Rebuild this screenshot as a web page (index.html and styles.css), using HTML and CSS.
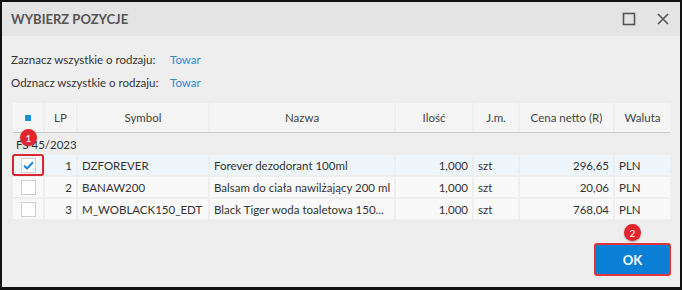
FILE: index.html
```html
<!DOCTYPE html>
<html lang="pl">
<head>
    <meta charset="UTF-8">
    <meta name="viewport" content="width=device-width, initial-scale=1.0">
    <title>Wybierz pozycje</title>
    <link rel="stylesheet" href="styles.css">
</head>
<body>

    <div class="dialog">
        <!-- pasek tytułu -->
        <div class="titlebar">
            <h1>WYBIERZ POZYCJE</h1>
            <div class="win-buttons">
                <svg width="14" height="14" viewBox="0 0 14 14">
                    <rect x="1.5" y="1.5" width="11" height="11" fill="none" stroke="#555" stroke-width="1.6"/>
                </svg>
                <svg width="14" height="14" viewBox="0 0 14 14">
                    <path d="M2 2 L12 12 M12 2 L2 12" stroke="#555" stroke-width="1.6"/>
                </svg>
            </div>
        </div>

        <div class="content">
            <div class="select-line">
                <span class="label">Zaznacz wszystkie o rodzaju:</span>
                <a href="#" class="link">Towar</a>
            </div>
            <div class="select-line">
                <span class="label">Odznacz wszystkie o rodzaju:</span>
                <a href="#" class="link">Towar</a>
            </div>

            <!-- lista pozycji -->
            <div class="grid">
                <div class="row head">
                    <div class="cell c-check"><span class="partial"></span></div>
                    <div class="cell c-lp">LP</div>
                    <div class="cell c-symbol">Symbol</div>
                    <div class="cell c-name">Nazwa</div>
                    <div class="cell c-qty">Ilość</div>
                    <div class="cell c-unit">J.m.</div>
                    <div class="cell c-price">Cena netto (R)</div>
                    <div class="cell c-cur">Waluta</div>
                </div>

                <div class="group">FS 45/2023</div>

                <div class="row selected">
                    <div class="cell c-check marked">
                        <span class="box">
                            <svg width="11" height="9" viewBox="0 0 11 9">
                                <path d="M1 4.5 L4 7.5 L10 1.2" fill="none" stroke="#1a86d4" stroke-width="2"/>
                            </svg>
                        </span>
                        <span class="badge">1</span>
                    </div>
                    <div class="cell c-lp">1</div>
                    <div class="cell c-symbol">DZFOREVER</div>
                    <div class="cell c-name">Forever dezodorant 100ml</div>
                    <div class="cell c-qty">1,000</div>
                    <div class="cell c-unit">szt</div>
                    <div class="cell c-price">296,65</div>
                    <div class="cell c-cur">PLN</div>
                </div>

                <div class="row">
                    <div class="cell c-check"><span class="box"></span></div>
                    <div class="cell c-lp">2</div>
                    <div class="cell c-symbol">BANAW200</div>
                    <div class="cell c-name">Balsam do ciała nawilżający 200 ml</div>
                    <div class="cell c-qty">1,000</div>
                    <div class="cell c-unit">szt</div>
                    <div class="cell c-price">20,06</div>
                    <div class="cell c-cur">PLN</div>
                </div>

                <div class="row">
                    <div class="cell c-check"><span class="box"></span></div>
                    <div class="cell c-lp">3</div>
                    <div class="cell c-symbol">M_WOBLACK150_EDT</div>
                    <div class="cell c-name">Black Tiger woda toaletowa 150...</div>
                    <div class="cell c-qty">1,000</div>
                    <div class="cell c-unit">szt</div>
                    <div class="cell c-price">768,04</div>
                    <div class="cell c-cur">PLN</div>
                </div>
            </div>

            <div class="footer">
                <button class="ok">OK<span class="badge">2</span></button>
            </div>
        </div>
    </div>

</body>
</html>
```

FILE: styles.css
```css
body {
    margin: 0;
    font-family: Lato, "Liberation Sans", Arial, sans-serif;
    font-size: 11.5px;
    color: #333;
    background-color: #111;
}

.dialog {
    width: 682px;
    height: 290px;
    box-sizing: border-box;
    border: 2px solid #111;
    border-bottom-width: 3px;
    background-color: #eeeeee;
}

.titlebar {
    height: 34px;
    background-color: #e4e4e4;
    display: flex;
    align-items: center;
    justify-content: space-between;
    padding: 0 10px 0 9px;
}

.titlebar h1 {
    margin: 0;
    font-size: 13px;
    font-weight: bold;
    color: #555;
}

.win-buttons {
    display: flex;
    gap: 20px;
    align-items: center;
}

.content {
    padding: 12px 9px 0 9px;
}

.select-line {
    height: 23px;
    display: flex;
    align-items: center;
    white-space: nowrap;
}

.select-line .label {
    width: 159px;
}

.link {
    color: #2d8bd4;
    text-decoration: none;
}

.grid {
    margin: 9px 1px 0 2px;
    display: flex;
    flex-direction: column;
}

.row {
    display: flex;
    gap: 2px;
    height: 20px;
    margin-bottom: 2px;
}

.row .cell {
    background-color: #f9f9f9;
    display: flex;
    align-items: center;
    padding: 0 4px;
    box-sizing: border-box;
    white-space: nowrap;
    overflow: hidden;
}

.row.selected .cell {
    background-color: #eef6fb;
}

.row.head {
    height: 29px;
    margin-bottom: 0;
    border-bottom: 1px solid #c9c9c9;
}

.row.head .cell {
    background-color: #f5f5f5;
    justify-content: center;
    color: #444;
}

.group {
    height: 22px;
    display: flex;
    align-items: center;
    padding-left: 3px;
}

.c-check { width: 30px; justify-content: center; position: relative; overflow: visible !important; }
.c-lp { width: 31px; justify-content: flex-end; }
.c-symbol { width: 130px; }
.c-name { width: 184px; }
.c-qty { width: 76px; justify-content: flex-end; }
.c-unit { width: 44px; }
.c-price { width: 93px; justify-content: flex-end; }
.c-cur { width: 55px; }

.partial {
    width: 6px;
    height: 6px;
    background-color: #1a8fd8;
    outline: 1px solid #fff;
}

.box {
    width: 15px;
    height: 15px;
    box-sizing: border-box;
    border: 1px solid #cfcfcf;
    background-color: #fff;
    display: flex;
    align-items: center;
    justify-content: center;
}

.marked {
    outline: 2px solid #d9262f;
    outline-offset: -1px;
    border-radius: 2px;
}

.badge {
    position: absolute;
    width: 17px;
    height: 17px;
    border-radius: 50%;
    background-color: #e3262e;
    color: #fff;
    font-size: 10px;
    font-weight: normal;
    display: flex;
    align-items: center;
    justify-content: center;
    box-shadow: 0 1px 2px rgba(0, 0, 0, 0.3);
}

.c-check .badge {
    top: -26px;
    left: 7px;
}

.footer {
    display: flex;
    justify-content: flex-end;
    margin-top: 22px;
}

.ok {
    position: relative;
    width: 77px;
    height: 33px;
    background-color: #0b7fd5;
    color: #fff;
    font-family: Lato, "Liberation Sans", Arial, sans-serif;
    font-size: 13px;
    font-weight: bold;
    border: 2px solid #e0333a;
    border-radius: 3px;
    padding: 0;
    cursor: pointer;
}

.ok .badge {
    top: -21px;
    left: 28px;
}
```
